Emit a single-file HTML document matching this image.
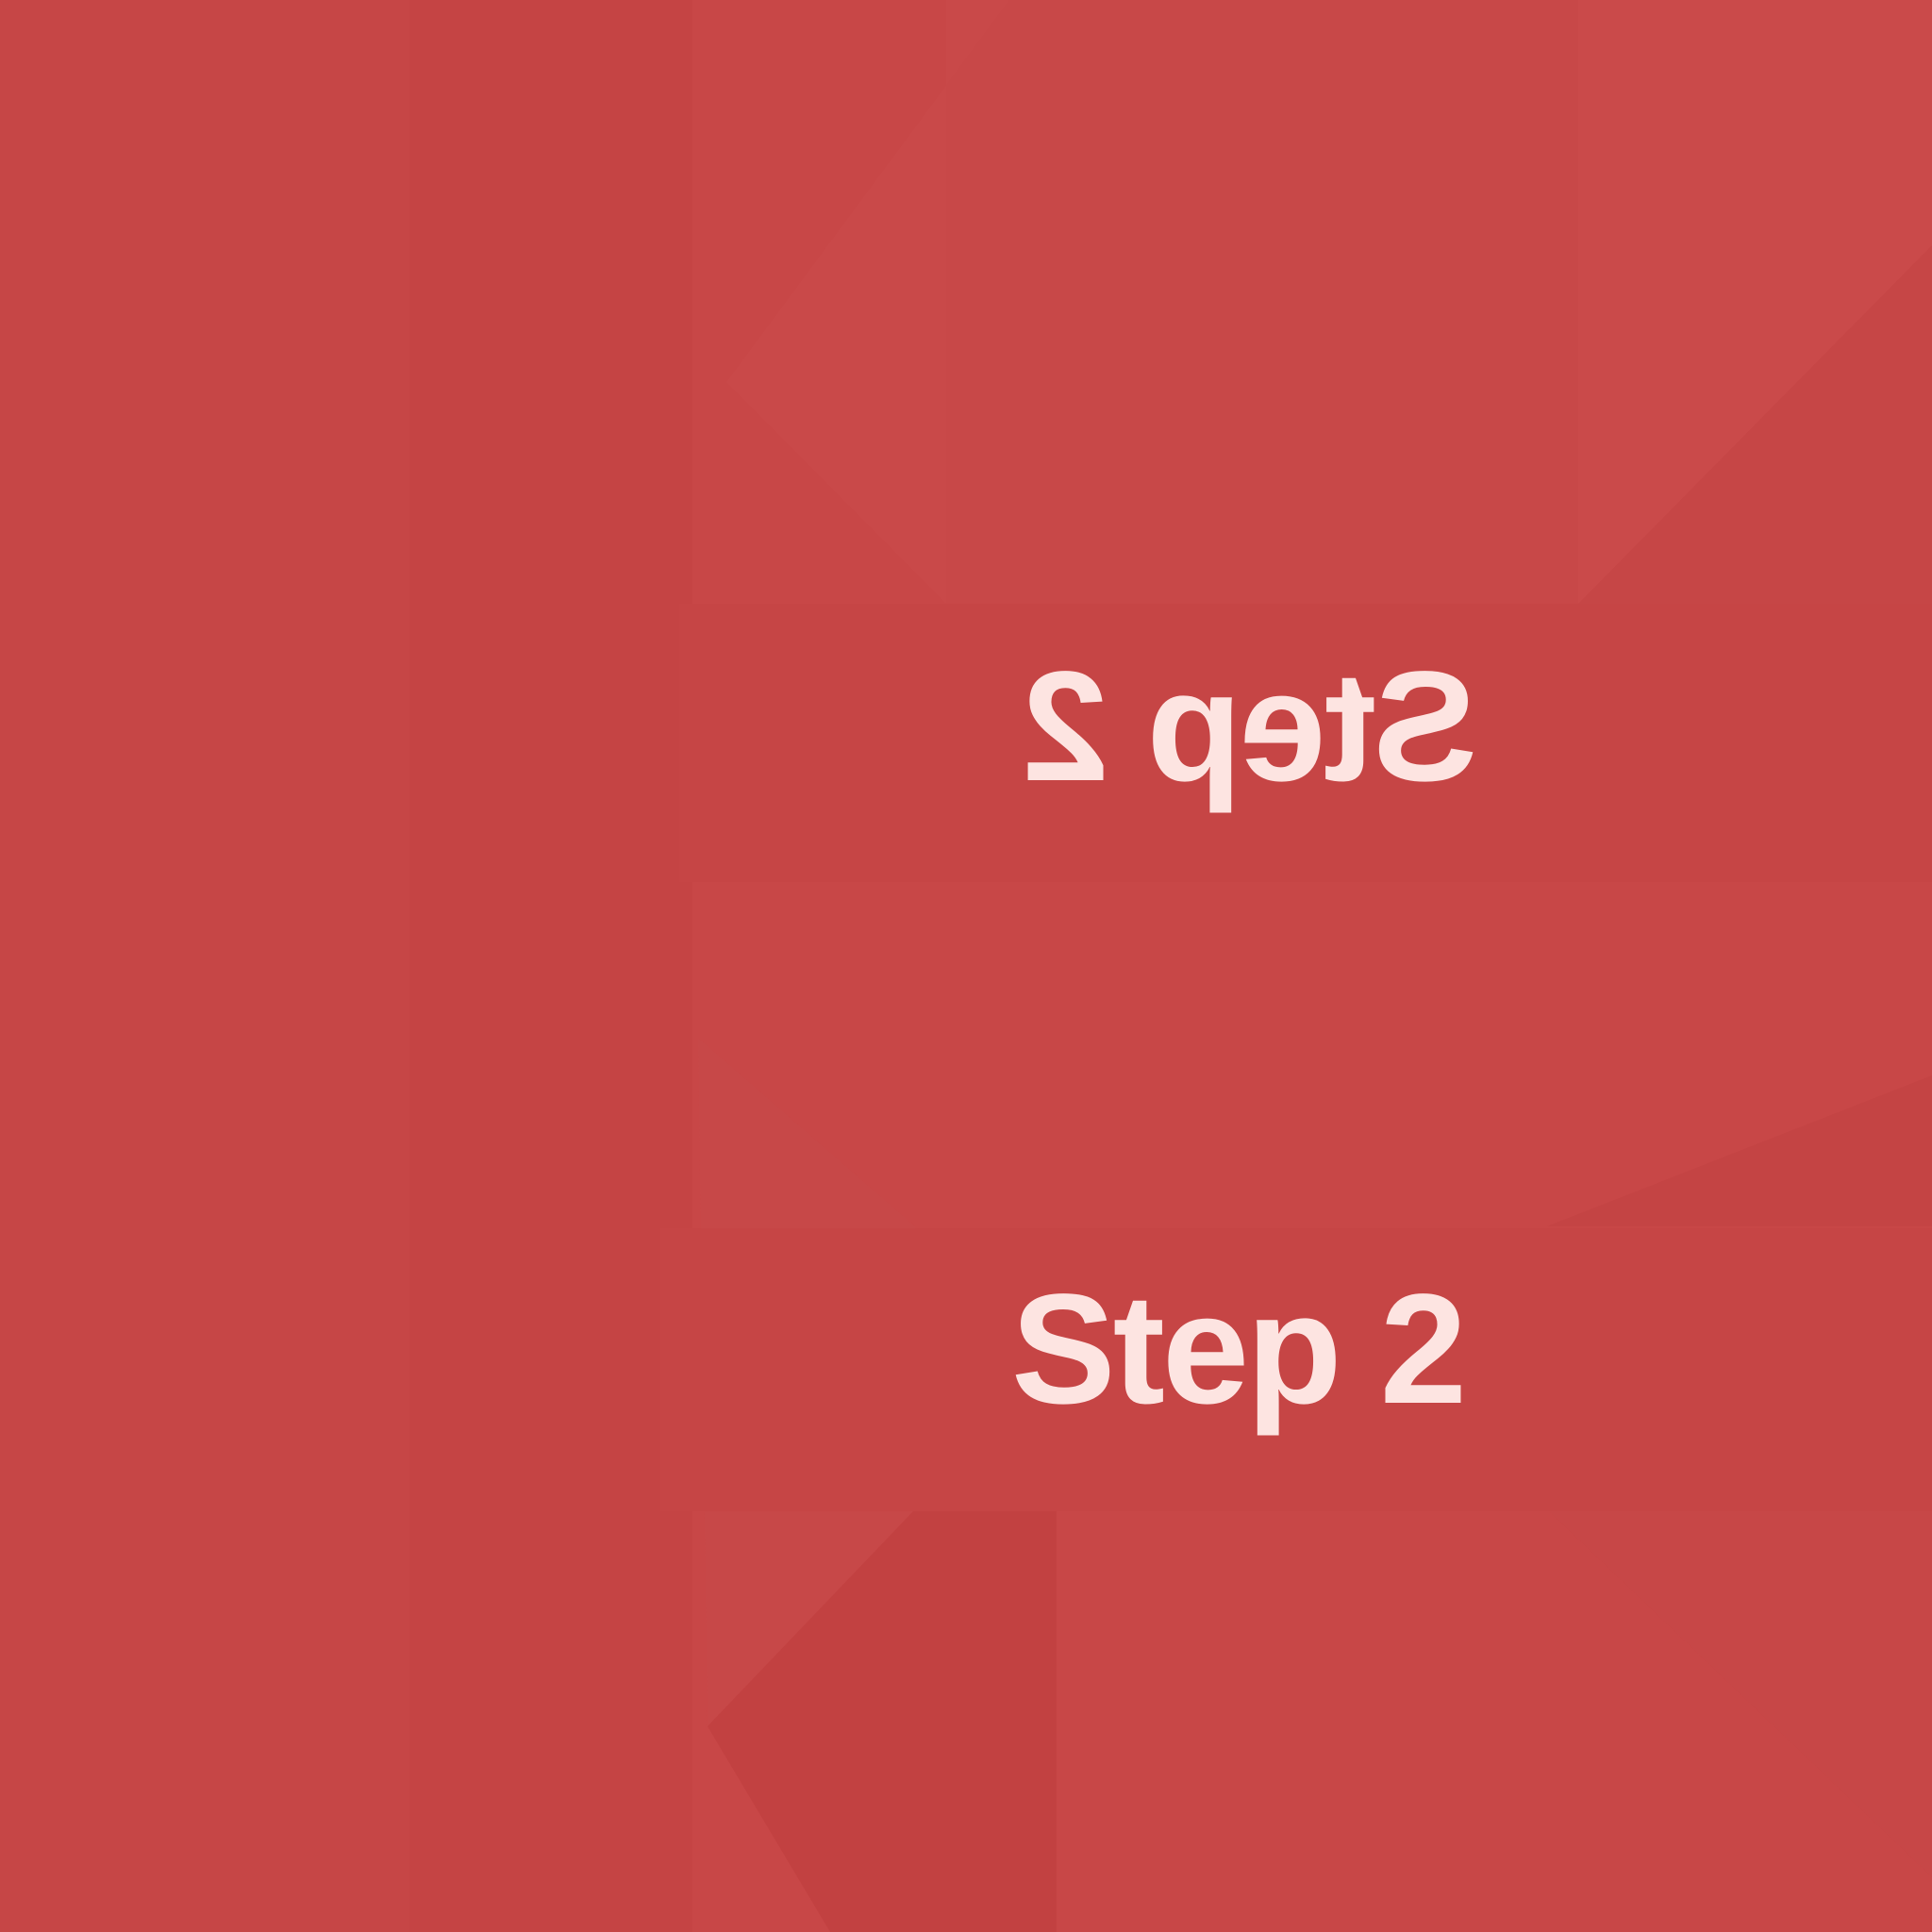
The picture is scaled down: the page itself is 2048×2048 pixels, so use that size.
<!DOCTYPE html>
<html><head><meta charset="utf-8"><style>
html,body{margin:0;padding:0}
body{width:2048px;height:2048px;background:#c84747;position:relative;overflow:hidden;font-family:"Liberation Sans",sans-serif}
.p{position:absolute}
.t{position:absolute;width:800px;text-align:center;font-weight:bold;color:#fde4e1;font-size:166px;line-height:1;letter-spacing:-3px}
</style></head><body>
<div class="p" style="left:0;top:0;width:434px;height:2048px;background:#c64646"></div>
<div class="p" style="left:434px;top:0;width:300px;height:2048px;background:#c54444"></div>
<div class="p" style="left:1003px;top:0;width:670px;height:640px;background:#c84848"></div>
<div class="p" style="left:1673px;top:0;width:375px;height:640px;background:#ca4a4a"></div>
<svg class="p" style="left:0;top:0" width="2048" height="2048">
<polygon points="770,405 1003,640 1003,0 1070,0" fill="#c94949"/>
<polygon points="1673,640 2048,260 2048,640" fill="#c64646"/>
<polygon points="740,1100 970,1300 970,1600 750,1830" fill="#c74848"/>
<polygon points="750,1830 970,1600 1120,1600 1120,2048 880,2048" fill="#c24141"/>
<polygon points="1640,1300 2048,1140 2048,1300" fill="#c44444"/>
<polygon points="1640,1600 2048,1600 2048,1990" fill="#c74747"/>
</svg>
<div class="p" style="left:720px;top:640px;width:1328px;height:295px;background:#c64545"></div>
<div class="p" style="left:700px;top:1302px;width:1348px;height:300px;background:#c64545"></div>
<div class="t" style="left:926px;top:688px;transform:scaleX(-1)">Step 2</div>
<div class="t" style="left:912px;top:1348px">Step 2</div>
</body></html>
